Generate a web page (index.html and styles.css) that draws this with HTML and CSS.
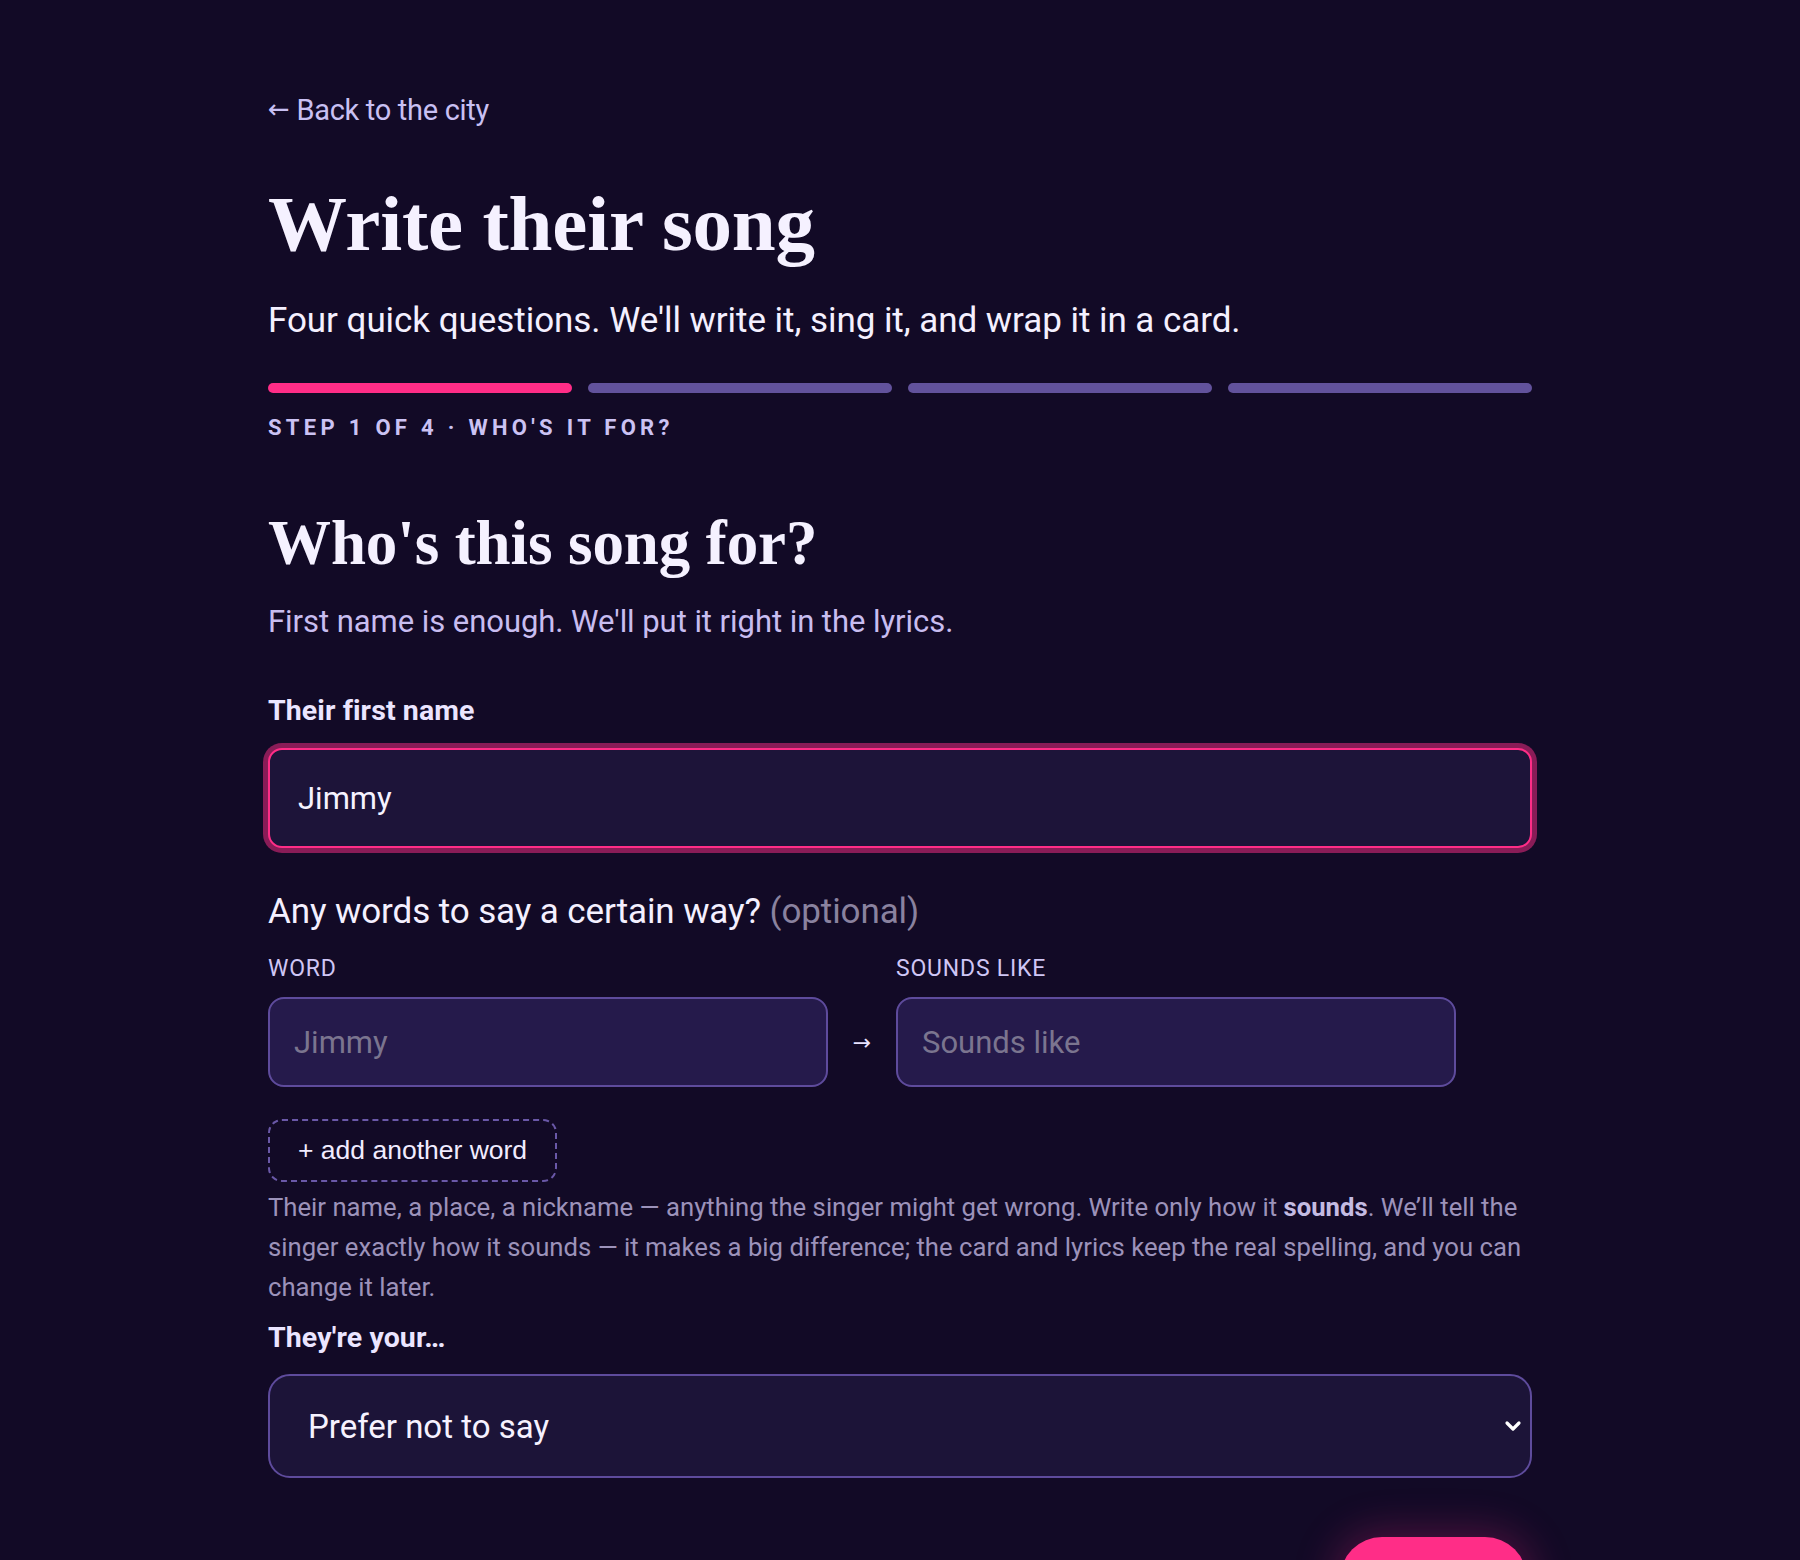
FILE: index.html
```html
<!DOCTYPE html>
<html lang="en">
<head>
<meta charset="utf-8">
<title>Write their song</title>
<link rel="stylesheet" href="styles.css">
</head>
<body>
<main class="page">
  <a class="back" href="#"><span class="back-arrow">←</span> Back to the city</a>
  <h1 class="title">Write their song</h1>
  <p class="lede">Four quick questions. We'll write it, sing it, and wrap it in a card.</p>

  <div class="progress">
    <span class="seg seg-active"></span>
    <span class="seg"></span>
    <span class="seg"></span>
    <span class="seg"></span>
  </div>
  <p class="step">Step 1 of 4 · Who's it for?</p>

  <section class="question">
    <h2 class="q-title">Who's this song for?</h2>
    <p class="hint">First name is enough. We'll put it right in the lyrics.</p>

    <label class="field-label" for="name">Their first name</label>
    <input class="name-input" id="name" type="text" value="Jimmy" autofocus>

    <h3 class="sub-q">Any words to say a certain way? <span class="opt">(optional)</span></h3>

    <div class="pron-grid">
      <span class="col-label">Word</span>
      <span></span>
      <span class="col-label">Sounds like</span>
      <span></span>
      <input class="pron-input" type="text" placeholder="Jimmy">
      <span class="pron-arrow">→</span>
      <input class="pron-input" type="text" placeholder="Sounds like">
      <span></span>
    </div>

    <button class="add-word" type="button">+ add another word</button>

    <p class="help">Their name, a place, a nickname — anything the singer might get wrong. Write only how it <strong>sounds</strong>. We’ll tell the singer exactly how it sounds — it makes a big difference; the card and lyrics keep the real spelling, and you can change it later.</p>

    <label class="field-label field-label-rel" for="rel">They're your…</label>
    <div class="select-wrap">
      <select class="rel-select" id="rel">
        <option>Prefer not to say</option>
        <option>Partner</option>
        <option>Friend</option>
        <option>Parent</option>
      </select>
      <svg class="chev" width="18" height="12" viewBox="0 0 18 12" aria-hidden="true">
        <path d="M3 3 L9 9 L15 3" fill="none" stroke="#ffffff" stroke-width="3.2" stroke-linecap="round" stroke-linejoin="round"/>
      </svg>
    </div>

    <div class="actions">
      <button class="next" type="button">Next →</button>
    </div>
  </section>
</main>
</body>
</html>
```

FILE: styles.css
```css
* { box-sizing: border-box; }

html, body {
  margin: 0;
  padding: 0;
  background: #120a26;
}

body {
  font-family: Roboto, "Noto Sans", "Liberation Sans", sans-serif;
  color: #f4f0ff;
}

.page {
  width: 1264px;
  margin: 0 auto;
  padding-top: 92px;
  display: flex;
  flex-direction: column;
  align-items: stretch;
}

.back {
  align-self: flex-start;
  font-size: 29px;
  line-height: 36px;
  color: #c9c0f3;
  text-decoration: none;
  letter-spacing: -0.3px;
  margin-bottom: 52px;
}

.back-arrow {
  font-family: "DejaVu Sans", sans-serif;
  font-size: 26px;
  position: relative;
  top: -2px;
}

.title {
  margin: 0 0 29px;
  font-family: "Liberation Serif", "Times New Roman", serif;
  font-weight: 700;
  font-size: 79px;
  line-height: 86px;
  color: #f5f1ff;
  letter-spacing: -0.2px;
}

.lede {
  margin: 0 0 38px;
  font-size: 35px;
  line-height: 49px;
  color: #f4f0ff;
  letter-spacing: -0.05px;
}

.progress {
  display: grid;
  grid-template-columns: repeat(4, 1fr);
  gap: 16px;
  margin-bottom: 19px;
}

.seg {
  height: 10px;
  border-radius: 5px;
  background: #62529c;
}

.seg-active {
  background: #ff2d87;
}

.step {
  margin: 0 0 65px;
  font-size: 22px;
  line-height: 31px;
  font-weight: 700;
  text-transform: uppercase;
  letter-spacing: 4.3px;
  color: #cbc2f3;
}

.question {
  display: flex;
  flex-direction: column;
}

.q-title {
  margin: 0 0 20px;
  font-family: "Liberation Serif", "Times New Roman", serif;
  font-weight: 700;
  font-size: 63px;
  line-height: 71px;
  color: #f5f1ff;
  letter-spacing: -0.1px;
}

.hint {
  margin: 0 0 46px;
  font-size: 31px;
  line-height: 46px;
  color: #c8bdf0;
  letter-spacing: -0.05px;
}

.field-label {
  display: block;
  font-size: 28.5px;
  line-height: 39px;
  font-weight: 700;
  color: #ebe5ff;
  margin-bottom: 18px;
  letter-spacing: 0.1px;
}

.name-input {
  width: 100%;
  height: 100px;
  padding: 0 28px;
  border: 2px solid #ff2d87;
  border-radius: 14px;
  background: #1d1439;
  box-shadow: 0 0 0 5px rgba(255, 45, 135, 0.5);
  font-family: Roboto, "Liberation Sans", sans-serif;
  font-size: 31px;
  color: #f6f2ff;
  caret-color: #ffffff;
  outline: none;
  margin-bottom: 41px;
}

.sub-q {
  margin: 0 0 20px;
  font-size: 35px;
  line-height: 45px;
  font-weight: 400;
  color: #f4f0ff;
  letter-spacing: -0.1px;
}

.opt {
  color: #8a829f;
}

.pron-grid {
  display: grid;
  grid-template-columns: 1fr 20px 1fr 52px;
  column-gap: 24px;
  row-gap: 13px;
  align-items: center;
  margin-bottom: 32px;
}

.col-label {
  font-size: 23px;
  line-height: 30px;
  letter-spacing: 0.8px;
  text-transform: uppercase;
  color: #cfc6f5;
}

.pron-input {
  width: 100%;
  height: 90px;
  padding: 0 24px;
  border: 2px solid #5e4b9c;
  border-radius: 16px;
  background: #251a4b;
  font-family: Roboto, "Liberation Sans", sans-serif;
  font-size: 31px;
  color: #f4f0ff;
  outline: none;
}

.pron-input::placeholder {
  color: #7b758f;
}

.pron-arrow {
  font-family: "DejaVu Sans", sans-serif;
  font-size: 22px;
  color: #e8e2ff;
  text-align: center;
}

.add-word {
  align-self: flex-start;
  height: 63px;
  padding: 0 28px;
  border: 2px dashed #6a58a8;
  border-radius: 14px;
  background: transparent;
  font-family: "Liberation Sans", Arial, sans-serif;
  font-size: 26.5px;
  color: #f1ecff;
  margin-bottom: 5px;
  cursor: pointer;
}

.help {
  margin: 0 0 11px;
  font-size: 25.7px;
  line-height: 40px;
  color: #9c92ba;
  letter-spacing: 0;
}

.help strong {
  font-weight: 700;
  color: #c4bbe2;
}

.field-label-rel {
  margin-bottom: 17px;
}

.select-wrap {
  position: relative;
  margin-bottom: 59px;
}

.rel-select {
  -webkit-appearance: none;
  appearance: none;
  width: 100%;
  height: 104px;
  padding: 0 60px 0 38px;
  border: 2px solid #5e4b9c;
  border-radius: 22px;
  background: #1c1438;
  font-family: Roboto, "Liberation Sans", sans-serif;
  font-size: 33px;
  color: #f6f2ff;
  outline: none;
}

.chev {
  position: absolute;
  right: 10px;
  top: 46px;
  pointer-events: none;
}

.actions {
  display: flex;
  justify-content: flex-end;
  padding-right: 5px;
  padding-bottom: 40px;
}

.next {
  width: 187px;
  height: 84px;
  border: none;
  border-radius: 42px;
  background: #ff2d87;
  box-shadow: 0 0 40px 6px rgba(255, 45, 135, 0.25);
  font-family: Roboto, sans-serif;
  font-size: 28px;
  font-weight: 700;
  color: #ffffff;
}
```
